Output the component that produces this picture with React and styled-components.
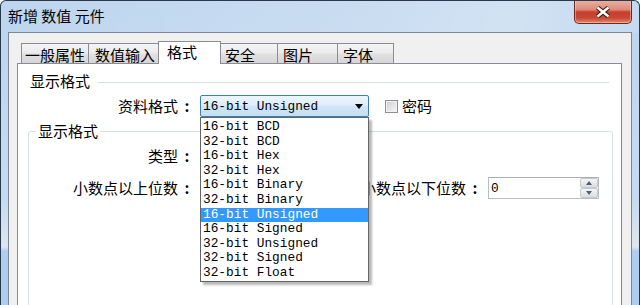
import styled, { createGlobalStyle } from "styled-components";

const CJK = `"Noto Sans CJK SC", "Noto Sans", sans-serif`;
const MONO = `"Liberation Mono", "DejaVu Sans Mono", monospace`;

const TABS = [
    { label: "一般属性", width: 68, pad: 3 },
    { label: "数值输入", width: 71, pad: 6 },
    { label: "格式", width: 63, pad: 8, active: true },
    { label: "安全", width: 58, pad: 4 },
    { label: "图片", width: 61, pad: 5 },
    { label: "字体", width: 57, pad: 5 },
];

const FORMATS = [
    "16-bit BCD",
    "32-bit BCD",
    "16-bit Hex",
    "32-bit Hex",
    "16-bit Binary",
    "32-bit Binary",
    "16-bit Unsigned",
    "16-bit Signed",
    "32-bit Unsigned",
    "32-bit Signed",
    "32-bit Float",
];

const SELECTED = "16-bit Unsigned";

function App() {
    return (
        <>
            <GlobalStyle />
            <S_Window>
                <S_TitleBar>
                    <S_Title>新增 数值 元件</S_Title>
                    <S_CloseButton>
                        <svg width="18" height="14" viewBox="0 0 18 14">
                            <path
                                d="M3.5 2.5 L14.5 11.5 M14.5 2.5 L3.5 11.5"
                                stroke="#3d1710"
                                strokeWidth="4.6"
                                fill="none"
                            />
                            <path
                                d="M3.5 2.5 L14.5 11.5 M14.5 2.5 L3.5 11.5"
                                stroke="#ffffff"
                                strokeWidth="2.4"
                                fill="none"
                            />
                        </svg>
                    </S_CloseButton>
                </S_TitleBar>

                <S_Client>
                    <S_TabStrip>
                        {TABS.map((tab, i) => (
                            <S_Tab
                                key={tab.label}
                                $width={tab.width}
                                $pad={tab.pad}
                                $active={tab.active}
                                $first={i === 0}
                            >
                                {tab.label}
                            </S_Tab>
                        ))}
                    </S_TabStrip>

                    <S_Panel>
                        <S_SectionHeader>
                            <span>显示格式</span>
                            <S_Rule />
                        </S_SectionHeader>

                        <S_Row>
                            <S_Label $width={167}>
                                资料格式<S_Colon>:</S_Colon>
                            </S_Label>
                            <S_ComboWrap>
                                <S_Combo $hot $width={169}>
                                    {SELECTED}
                                    <S_Arrow />
                                </S_Combo>
                                <S_ListBox>
                                    {FORMATS.map((f) => (
                                        <S_ListItem key={f} $selected={f === SELECTED}>
                                            {f}
                                        </S_ListItem>
                                    ))}
                                </S_ListBox>
                            </S_ComboWrap>
                            <S_CheckLabel>
                                <S_CheckBox />
                                密码
                            </S_CheckLabel>
                        </S_Row>

                        <S_Group>
                            <S_Legend>显示格式</S_Legend>
                            <S_Row $top={6}>
                                <S_Label $width={166}>
                                    类型<S_Colon>:</S_Colon>
                                </S_Label>
                                {/* covered by the open list above */}
                                <S_Combo $width={169}>
                                    <S_Arrow />
                                </S_Combo>
                            </S_Row>
                            <S_Row $top={10}>
                                <S_Label $width={166}>
                                    小数点以上位数<S_Colon>:</S_Colon>
                                </S_Label>
                                <S_Edit $width={140} />
                                <S_Label $width={143}>
                                    小数点以下位数<S_Colon>:</S_Colon>
                                </S_Label>
                                <S_Edit $width={111}>
                                    0
                                    <S_Spin>
                                        <S_SpinButton>
                                            <S_SpinArrow $up />
                                        </S_SpinButton>
                                        <S_SpinButton>
                                            <S_SpinArrow />
                                        </S_SpinButton>
                                    </S_Spin>
                                </S_Edit>
                            </S_Row>
                        </S_Group>
                    </S_Panel>
                </S_Client>
            </S_Window>
        </>
    );
}

const GlobalStyle = createGlobalStyle`
    html, body {
        margin: 0;
        padding: 0;
        overflow: hidden;
        background: #fff;
    }
    body {
        font-family: ${CJK};
        font-size: 15px;
        color: #000;
    }
`;

const S_Window = styled.div`
    box-sizing: border-box;
    width: 640px;
    height: 305px;
    overflow: hidden;
    display: flex;
    flex-direction: column;
    padding: 0 7px;
    border: 1px solid #27394b;
    border-bottom: none;
    border-radius: 6px 6px 0 0;
    background:
        linear-gradient(
                100deg,
                rgba(255, 255, 255, 0) 0%,
                rgba(255, 255, 255, 0.18) 55%,
                rgba(255, 255, 255, 0.3) 80%,
                rgba(255, 255, 255, 0.1) 100%
            )
            0 0 / 100% 32px no-repeat,
        linear-gradient(
            to bottom,
            #bdd5ee 0px,
            #c6dbf1 200px,
            #dae4ef 236px,
            #dfe6ef 246px,
            #afcdf1 250px,
            #afcdf1 100%
        );
`;

const S_TitleBar = styled.div`
    display: flex;
    align-items: flex-start;
    height: 31px;
    flex-shrink: 0;
`;

const S_Title = styled.div`
    font-size: 15px;
    line-height: 18px;
    padding-top: 6px;
    color: #000;
`;

const S_CloseButton = styled.div`
    box-sizing: border-box;
    margin: -1px 0 0 auto;
    width: 58px;
    height: 24px;
    display: flex;
    align-items: center;
    justify-content: center;
    border: 1px solid #6b2a1f;
    border-top: none;
    border-radius: 0 0 5px 5px;
    box-shadow: inset 0 0 0 1px rgba(255, 220, 210, 0.45);
    background: linear-gradient(
        to bottom,
        #eab3a6 0%,
        #dd8a78 42%,
        #c63f2b 52%,
        #c94833 78%,
        #e08a72 100%
    );
`;

const S_Client = styled.div`
    flex: 1;
    min-height: 0;
    display: flex;
    flex-direction: column;
    padding: 8px 9px 0 8px;
    border: 1px solid #7a8896;
    border-bottom: none;
    background: #f0f0f0;
`;

const S_TabStrip = styled.div`
    display: flex;
    align-items: flex-end;
    flex-shrink: 0;
    height: 23px;
    margin: 0 0 -1px 4px;
    position: relative;
    z-index: 1;
`;

const S_Tab = styled.div`
    box-sizing: border-box;
    width: ${(p) => p.$width}px;
    height: ${(p) => (p.$active ? 23 : 20)}px;
    margin-left: ${(p) => (p.$first ? 0 : -1)}px;
    margin-bottom: ${(p) => (p.$active ? 0 : 1)}px;
    padding-left: ${(p) => p.$pad}px;
    border: 1px solid #8a8d94;
    border-bottom: none;
    line-height: ${(p) => (p.$active ? 20 : 21)}px;
    white-space: nowrap;
    position: relative;
    z-index: ${(p) => (p.$active ? 2 : 1)};
    background: ${(p) =>
        p.$active
            ? "#ffffff"
            : "linear-gradient(to bottom, #f4f4f4 0%, #ececec 45%, #e0e0e0 55%, #d6d6d6 100%)"};
`;

const S_Panel = styled.div`
    flex: 1;
    display: flex;
    flex-direction: column;
    padding: 0 8px 0 10px;
    border: 1px solid #898c95;
    border-bottom: none;
    background: #fff;
    position: relative;
`;

const S_SectionHeader = styled.div`
    display: flex;
    align-items: center;
    margin-top: 9px;
    padding-left: 2px;
    line-height: 16px;
`;

const S_Rule = styled.div`
    flex: 1;
    height: 1px;
    margin: 2px 4px 0 8px;
    background: #d5dfe5;
`;

const S_Row = styled.div`
    display: flex;
    align-items: center;
    flex-shrink: 0;
    margin-top: ${(p) => p.$top ?? 6}px;
    height: 22px;
`;

const S_Label = styled.div`
    width: ${(p) => p.$width}px;
    margin-right: 5px;
    text-align: right;
    white-space: nowrap;
    line-height: 18px;
`;

const S_Colon = styled.span`
    display: inline-block;
    width: 16px;
    margin-left: 1px;
    text-align: center;
    font-weight: 700;
`;

const S_ComboWrap = styled.div`
    position: relative;
`;

const S_Combo = styled.div`
    box-sizing: border-box;
    width: ${(p) => p.$width}px;
    height: 22px;
    display: flex;
    align-items: center;
    padding-left: 2px;
    font-family: ${MONO};
    font-size: 12.8px;
    border: 1px solid ${(p) => (p.$hot ? "#3c7fb1" : "#707070")};
    border-radius: 2px;
    background: ${(p) =>
        p.$hot
            ? "linear-gradient(to bottom, #edf5fc 0%, #e0eef9 45%, #cfe6f7 52%, #c2dff3 100%)"
            : "linear-gradient(to bottom, #f2f2f2 0%, #ebebeb 45%, #dddddd 52%, #cfcfcf 100%)"};
`;

const S_Arrow = styled.span`
    margin: 1px 5px 0 auto;
    width: 0;
    height: 0;
    border-left: 4.5px solid transparent;
    border-right: 4.5px solid transparent;
    border-top: 5px solid #000;
`;

const S_ListBox = styled.div`
    box-sizing: border-box;
    position: absolute;
    top: 100%;
    left: 0;
    z-index: 10;
    width: 169px;
    padding-top: 2px;
    border: 1px solid #646464;
    background: #fff;
    box-shadow: 3px 3px 2px rgba(0, 0, 0, 0.28);
    font-family: ${MONO};
    font-size: 12.8px;
`;

const S_ListItem = styled.div`
    height: 14.6px;
    line-height: 14.6px;
    padding-left: 2px;
    white-space: nowrap;
    color: ${(p) => (p.$selected ? "#fff" : "#000")};
    background: ${(p) => (p.$selected ? "#3399ff" : "transparent")};
`;

const S_CheckLabel = styled.label`
    display: flex;
    align-items: center;
    gap: 4px;
    margin-left: 16px;
    line-height: 18px;
`;

const S_CheckBox = styled.span`
    box-sizing: border-box;
    width: 13px;
    height: 13px;
    border: 1px solid #8e8f8f;
    background: linear-gradient(135deg, #c9cdd2 0%, #e6e7e9 60%, #f6f6f6 100%);
    box-shadow: inset 0 0 0 1px #f2f2f2;
`;

const S_Group = styled.fieldset`
    flex-shrink: 0;
    margin: 6px 0 0;
    padding: 0;
    min-width: 0;
    height: 220px;
    border: 1px solid #d5dfe5;
    border-radius: 3px;
`;

const S_Legend = styled.legend`
    margin-left: 7px;
    padding: 0 2px;
    line-height: 16px;
`;

const S_Edit = styled.div`
    box-sizing: border-box;
    position: relative;
    width: ${(p) => p.$width}px;
    height: 22px;
    display: flex;
    align-items: center;
    padding-left: 2px;
    font-family: ${MONO};
    font-size: 12.8px;
    border: 1px solid #b8bcc4;
    border-top-color: #abadb3;
    background: #fff;
`;

const S_Spin = styled.div`
    margin-left: auto;
    display: flex;
    flex-direction: column;
    width: 18px;
    height: 20px;
`;

const S_SpinButton = styled.div`
    box-sizing: border-box;
    flex: 1;
    display: flex;
    align-items: center;
    justify-content: center;
    border: 1px solid #c4c9d0;
    border-radius: 2px;
    background: linear-gradient(to bottom, #f6f6f6 0%, #e9e9e9 50%, #dcdcdc 100%);
`;

const S_SpinArrow = styled.span`
    width: 0;
    height: 0;
    border-left: 3.5px solid transparent;
    border-right: 3.5px solid transparent;
    ${(p) =>
        p.$up
            ? "border-bottom: 4px solid #4b5f7d;"
            : "border-top: 4px solid #4b5f7d;"}
`;

export default App;
